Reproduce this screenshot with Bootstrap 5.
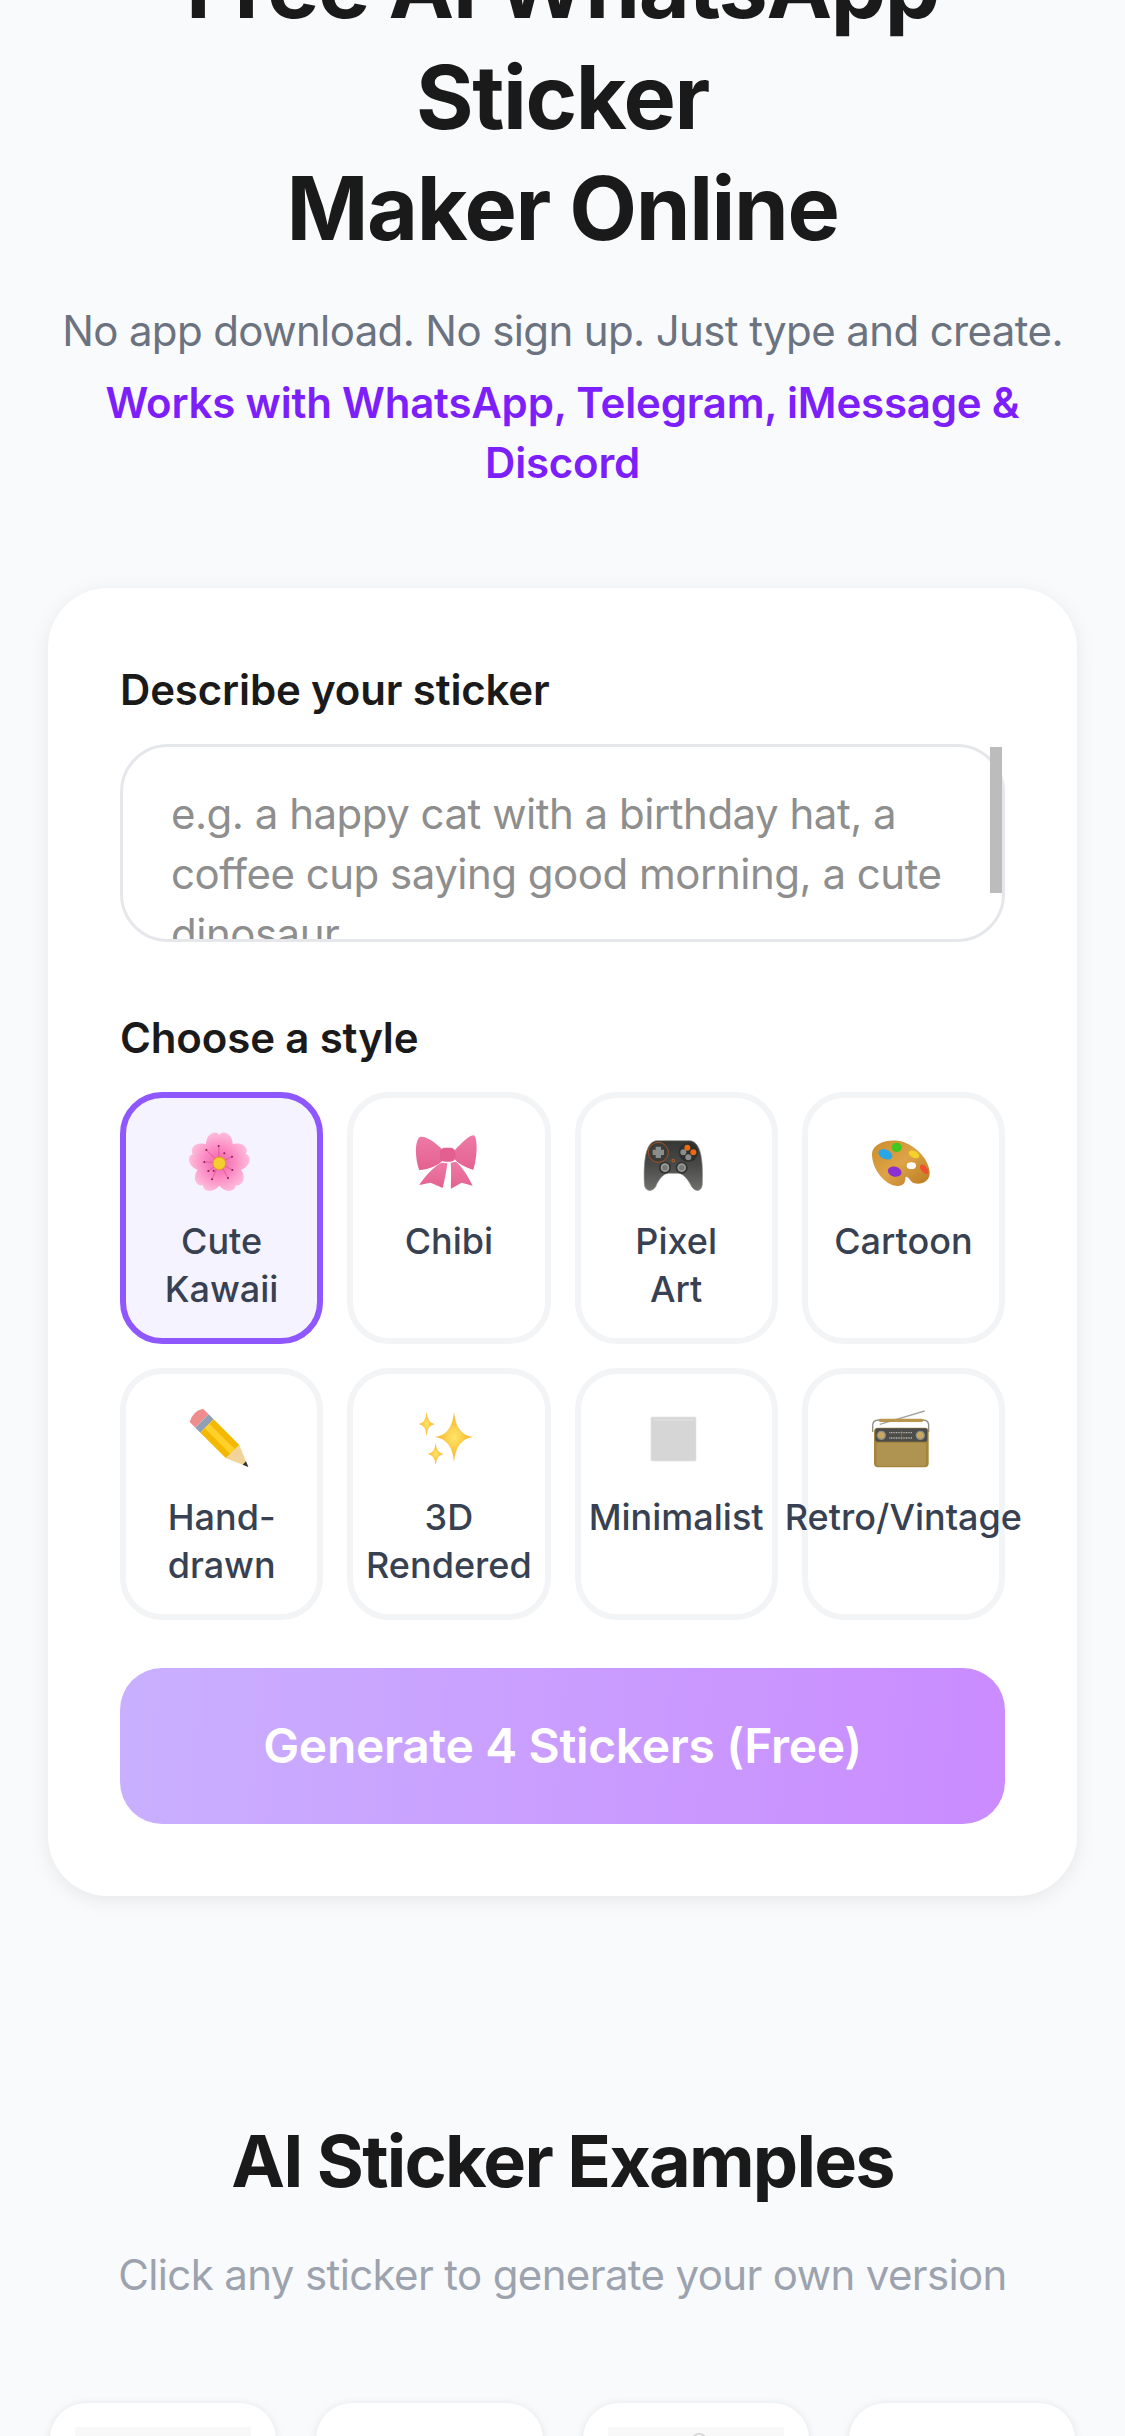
<!DOCTYPE html>
<html lang="en">
<head>
    <meta charset="UTF-8">
    <meta name="viewport" content="width=device-width, initial-scale=1.0">
    <title>Free AI WhatsApp Sticker Maker Online</title>
    <link rel="stylesheet" href="https://cdn.jsdelivr.net/npm/bootstrap@5.3.0/dist/css/bootstrap.min.css">
    <style>
        html, body { height: 2436px; overflow: hidden; }
        body { background: #f9fafb; color: #1a1a1a; font-family: Inter, "Liberation Sans", sans-serif; }

        /* header */
        .hero-title { margin: -69px 0 0; font-size: 88px; line-height: 111px; font-weight: 700; letter-spacing: -1.4px; color: #1a1a1a; }
        .hero-sub { margin: 37px 0 0; font-size: 42px; line-height: 60px; letter-spacing: -.62px; color: #6b7280; }
        .hero-apps { margin: 12px 0 0; font-size: 42px; line-height: 60px; letter-spacing: -.2px; font-weight: 600; color: #7c1ffb; }

        /* main form card */
        .maker-card { margin: 95px 48px 0; padding: 75px 72px 72px; border: 0; border-radius: 60px; background: #fff; box-shadow: 0 4px 20px rgba(0, 0, 0, .08); }
        .maker-label { display: block; margin: 0 0 27px; font-size: 42px; line-height: 54px; letter-spacing: -.15px; font-weight: 600; color: #1a1a1a; }
        .prompt-wrap { height: 198px; margin-bottom: 69px; }
        .prompt-box { height: 198px; padding: 37px 48px 0; border: 3px solid #e5e7eb; border-radius: 48px; font-family: inherit; font-size: 42px; line-height: 60px; letter-spacing: -.5px; resize: none; overflow: hidden; }
        .prompt-box::placeholder { color: #8e8e8e; opacity: 1; }
        .prompt-scroll { position: absolute; top: 3px; right: 3px; width: 12px; height: 146px; background: #bcbcbc; }

        .style-grid { display: grid; grid-template-columns: repeat(4, minmax(0, 1fr)); gap: 24px; }
        .style-opt { padding: 22px 0 25px; height: 252px; border: 6px solid #f3f4f6; border-radius: 42px; background: #fff; color: #374151; font-size: 36px; line-height: 48px; font-weight: 500; white-space: nowrap; }
        .style-opt:hover { border-color: #f3f4f6; background: #fff; color: #374151; }
        .style-opt.picked { border-color: #8f57ff; background: #f5f3ff; }
        .style-opt svg { display: block; width: 100px; height: 85px; margin-bottom: 12px; flex: none; }

        .gen-btn { height: 156px; margin-top: 48px; border: 0; border-radius: 42px; background: linear-gradient(95deg, #c9b0ff, #ca8bff); color: #fff; font-size: 48px; letter-spacing: -.36px; font-weight: 600; }
        .gen-btn:hover, .gen-btn:disabled { background: linear-gradient(95deg, #c9b0ff, #ca8bff); color: #fff; opacity: 1; }

        /* examples */
        .ex-title { margin: 217px 0 0; font-size: 72px; line-height: 96px; font-weight: 700; letter-spacing: -1.8px; color: #1a1a1a; }
        .ex-sub { margin: 36px 0 0; font-size: 42px; line-height: 60px; letter-spacing: -.63px; color: #9ca3af; }
        .ex-grid { display: grid; grid-template-columns: repeat(4, minmax(0, 1fr)); gap: 40px; margin: 98px 50px 0; }
        .ex-item { height: 300px; padding: 24px 25px; border-radius: 36px; background: #fff; box-shadow: 0 1px 8px rgba(0, 0, 0, .1); }
        .ex-thumb { height: 200px; background: #f8f8f8; }
        .ex-thumb.plain { background: #fff; }
        .ex-thumb svg { display: block; width: 100%; height: 200px; }
    </style>
</head>

<body>
    <header class="text-center">
        <h1 class="hero-title">Free AI WhatsApp<br>Sticker<br>Maker Online</h1>
        <p class="hero-sub">No app download. No sign up. Just type and create.</p>
        <p class="hero-apps">Works with WhatsApp, Telegram, iMessage &amp;<br>Discord</p>
    </header>

    <main>
        <div class="card maker-card">
            <label class="maker-label" for="prompt">Describe your sticker</label>
            <div class="prompt-wrap position-relative">
                <textarea id="prompt" class="form-control prompt-box" placeholder="e.g. a happy cat with a birthday hat, a coffee cup saying good morning, a cute dinosaur"></textarea>
                <div class="prompt-scroll"></div>
            </div>

            <span class="maker-label">Choose a style</span>
            <div class="style-grid">
                <button class="btn style-opt picked d-flex flex-column align-items-center">
                    <svg viewBox="5 0 300 255" aria-hidden="true">
                        <defs>
                            <radialGradient id="petal" gradientUnits="userSpaceOnUse" cx="147" cy="128" r="95">
                                <stop offset="0" stop-color="#ee60a5"/><stop offset=".5" stop-color="#fb8cc4"/><stop offset="1" stop-color="#ffc2de"/>
                            </radialGradient>
                        </defs>
                        <g fill="url(#petal)">
                            <path id="pt" d="M147 128C114 108 100 80 110 56C118 36 140 32 147 45C154 32 176 36 184 56C194 80 180 108 147 128Z"/>
                            <use href="#pt" transform="rotate(72 147 128)"/>
                            <use href="#pt" transform="rotate(144 147 128)"/>
                            <use href="#pt" transform="rotate(216 147 128)"/>
                            <use href="#pt" transform="rotate(288 147 128)"/>
                        </g>
                        <g stroke="#e0468c" stroke-width="2">
                            <path d="M147 128L145 78M147 128L108 90M147 128L185 110M147 128L102 126M147 128L125 178M147 128L173 174M147 128L186 150M147 128L114 153"/>
                        </g>
                        <g fill="#8f1d55">
                            <circle cx="145" cy="78" r="3"/><circle cx="108" cy="90" r="3"/><circle cx="185" cy="110" r="3"/><circle cx="102" cy="126" r="3"/>
                            <circle cx="125" cy="178" r="3"/><circle cx="173" cy="174" r="3"/><circle cx="186" cy="150" r="3"/><circle cx="114" cy="153" r="3"/>
                            <circle cx="162" cy="100" r="3"/><circle cx="130" cy="152" r="3"/>
                        </g>
                        <circle cx="147" cy="130" r="19" fill="#f4cd2f" stroke="#e79a26" stroke-width="3"/>
                    </svg>
                    <span>Cute<br>Kawaii</span>
                </button>
                <button class="btn style-opt d-flex flex-column align-items-center">
                    <svg viewBox="-3 0 300 255" aria-hidden="true">
                        <defs>
                            <linearGradient id="bow" x1="0" y1="0" x2="0" y2="1">
                                <stop offset="0" stop-color="#ee7aa5"/><stop offset="1" stop-color="#e3618f"/>
                            </linearGradient>
                        </defs>
                        <g fill="url(#bow)">
                            <path d="M125 128C110 135 85 155 57 195L92 188L128 204C135 175 140 150 142 130Z"/>
                            <path d="M152 128C155 160 152 190 153 206L185 188L218 197C205 170 190 145 168 125Z"/>
                            <path d="M132 92C112 74 84 48 62 50C44 54 44 112 58 150C88 150 116 136 132 118Z"/>
                            <path d="M163 92C183 72 207 44 222 46C234 58 232 112 220 150C195 142 176 132 163 118Z"/>
                        </g>
                        <rect x="120" y="83" width="46" height="42" rx="15" fill="#e35f90"/>
                    </svg>
                    <span>Chibi</span>
                </button>
                <button class="btn style-opt d-flex flex-column align-items-center">
                    <svg viewBox="3 0 300 255" aria-hidden="true">
                        <defs>
                            <linearGradient id="pad" x1="0" y1="0" x2="0" y2="1">
                                <stop offset="0" stop-color="#353735"/><stop offset=".5" stop-color="#4a4b49"/><stop offset="1" stop-color="#6f706c"/>
                            </linearGradient>
                        </defs>
                        <path d="M95 62H195C225 65 235 110 232 190C232 212 215 220 200 200C190 180 175 160 160 160H130C115 160 100 180 92 200C78 220 58 212 58 190C55 110 65 65 95 62Z" fill="url(#pad)" stroke="#8a8c88" stroke-width="2"/>
                        <circle cx="100" cy="97" r="30" fill="#3c3d3b" stroke="#a8501f" stroke-width="3"/>
                        <path d="M92 80H108V89H117V105H108V114H92V105H83V89H92Z" fill="#8b8d8a"/>
                        <circle cx="190" cy="97" r="29" fill="#2e2f2e"/>
                        <circle cx="187" cy="83" r="9" fill="#ea6a10"/><circle cx="205" cy="97" r="9" fill="#ea6a10"/>
                        <circle cx="175" cy="97" r="9" fill="#8b8d8a"/><circle cx="190" cy="112" r="9" fill="#8b8d8a"/>
                        <circle cx="120" cy="143" r="18" fill="#2f302f"/><circle cx="120" cy="143" r="13" fill="#9a9b98"/><circle cx="120" cy="143" r="8" fill="#777875"/>
                        <circle cx="170" cy="143" r="18" fill="#2f302f"/><circle cx="170" cy="143" r="13" fill="#9a9b98"/><circle cx="170" cy="143" r="8" fill="#777875"/>
                        <circle cx="145" cy="122" r="4" fill="none" stroke="#c9601c" stroke-width="3"/>
                    </svg>
                    <span>Pixel<br>Art</span>
                </button>
                <button class="btn style-opt d-flex flex-column align-items-center">
                    <svg viewBox="-5 0 300 255" aria-hidden="true">
                        <defs>
                            <linearGradient id="wood" x1="0" y1="0" x2="1" y2="1">
                                <stop offset="0" stop-color="#c98d2d"/><stop offset=".5" stop-color="#dda346"/><stop offset="1" stop-color="#b9781f"/>
                            </linearGradient>
                        </defs>
                        <path d="M52 100C55 70 95 58 130 62C175 68 225 115 225 160C225 185 200 195 180 190C165 185 165 172 155 170C148 170 160 195 130 198C90 198 50 145 52 100Z" fill="url(#wood)"/>
                        <ellipse cx="170" cy="137" rx="14" ry="10" fill="#fff"/>
                        <ellipse cx="92" cy="103" rx="22" ry="14" transform="rotate(25 92 103)" fill="#2aa6e6"/>
                        <ellipse cx="126" cy="82" rx="15" ry="14" fill="#3fc81f"/>
                        <ellipse cx="178" cy="103" rx="17" ry="10" transform="rotate(25 178 103)" fill="#f5d22a"/>
                        <ellipse cx="209" cy="148" rx="17" ry="9" transform="rotate(50 209 148)" fill="#ef5030"/>
                        <ellipse cx="120" cy="155" rx="21" ry="15" transform="rotate(15 120 155)" fill="#8a2fd0"/>
                    </svg>
                    <span>Cartoon</span>
                </button>
                <button class="btn style-opt d-flex flex-column align-items-center">
                    <svg viewBox="5 0 300 255" aria-hidden="true">
                        <path d="M98 38L115 55L75 95L58 78Q66 46 98 38Z" fill="#ee8d8d"/>
                        <path d="M115 55L130 70L90 110L75 95Z" fill="#8fa0b5"/>
                        <path d="M130 70L207 147L167 187L90 110Z" fill="#f3b800"/>
                        <path d="M117 83L194 160L180 174L103 97Z" fill="#ffd02a"/>
                        <path d="M207 147L234 213L167 187Z" fill="#f2d49a"/>
                        <path d="M227 196L234 213L217 206Z" fill="#333"/>
                    </svg>
                    <span>Hand-<br>drawn</span>
                </button>
                <button class="btn style-opt d-flex flex-column align-items-center">
                    <svg viewBox="-3 0 300 255" aria-hidden="true">
                        <defs>
                            <radialGradient id="spark">
                                <stop offset="0" stop-color="#ffe66a"/><stop offset="1" stop-color="#f8ad22"/>
                            </radialGradient>
                        </defs>
                        <g fill="url(#spark)">
                            <path d="M162 48Q168 117 220 123Q168 129 162 198Q156 129 104 123Q156 117 162 48Z"/>
                            <path d="M80 48Q83 81 104 84Q83 87 80 120Q77 87 56 84Q77 81 80 48Z"/>
                            <path d="M107 142Q110 171 131 174Q110 177 107 206Q104 177 83 174Q104 171 107 142Z"/>
                        </g>
                    </svg>
                    <span>3D<br>Rendered</span>
                </button>
                <button class="btn style-opt d-flex flex-column align-items-center">
                    <svg viewBox="3 0 300 255" aria-hidden="true">
                        <rect x="78" y="63" width="135" height="132" rx="4" fill="#d6d6d6" stroke="#e4e4e4" stroke-width="2"/>
                        <path d="M84 72H207" stroke="#dfdfdf" stroke-width="5"/>
                    </svg>
                    <span>Minimalist</span>
                </button>
                <button class="btn style-opt d-flex flex-column align-items-center">
                    <svg viewBox="-5 0 300 255" aria-hidden="true">
                        <path d="M75 85L210 45" stroke="#a4a4a0" stroke-width="4"/>
                        <path d="M54 108V88Q54 72 72 72H205Q222 72 222 88V108" fill="none" stroke="#8f8f8b" stroke-width="4"/>
                        <rect x="72" y="68" width="134" height="10" rx="5" fill="#b9954d"/>
                        <rect x="58" y="95" width="164" height="119" rx="12" fill="#a5853c"/>
                        <rect x="62" y="97" width="156" height="40" rx="6" fill="#4c4c4a"/>
                        <rect x="66" y="141" width="148" height="68" rx="5" fill="#ae9450"/>
                        <circle cx="80" cy="118" r="14" fill="#8d8d88"/><circle cx="80" cy="118" r="10" fill="#c9a75e"/>
                        <circle cx="197" cy="118" r="14" fill="#8d8d88"/><circle cx="197" cy="118" r="10" fill="#c9a75e"/>
                        <path d="M104 110H174M104 126H174" stroke="#b5b5b0" stroke-width="4" stroke-dasharray="3 2"/>
                        <path d="M141 104V132" stroke="#c4702d" stroke-width="2"/>
                    </svg>
                    <span>Retro/Vintage</span>
                </button>
            </div>

            <button class="btn gen-btn w-100" disabled>Generate 4 Stickers (Free)</button>
        </div>

        <section class="text-center">
            <h2 class="ex-title">AI Sticker Examples</h2>
            <p class="ex-sub">Click any sticker to generate your own version</p>
            <div class="ex-grid">
                <div class="ex-item"><div class="ex-thumb"></div></div>
                <div class="ex-item"><div class="ex-thumb plain"></div></div>
                <div class="ex-item">
                    <div class="ex-thumb">
                        <svg viewBox="0 0 176 200" aria-hidden="true"><circle cx="91" cy="14" r="7" fill="#fff" stroke="#d8d8d8" stroke-width="2"/></svg>
                    </div>
                </div>
                <div class="ex-item"><div class="ex-thumb plain"></div></div>
            </div>
        </section>
    </main>

    <script src="https://cdn.jsdelivr.net/npm/bootstrap@5.3.0/dist/js/bootstrap.bundle.min.js"></script>
</body>
</html>
